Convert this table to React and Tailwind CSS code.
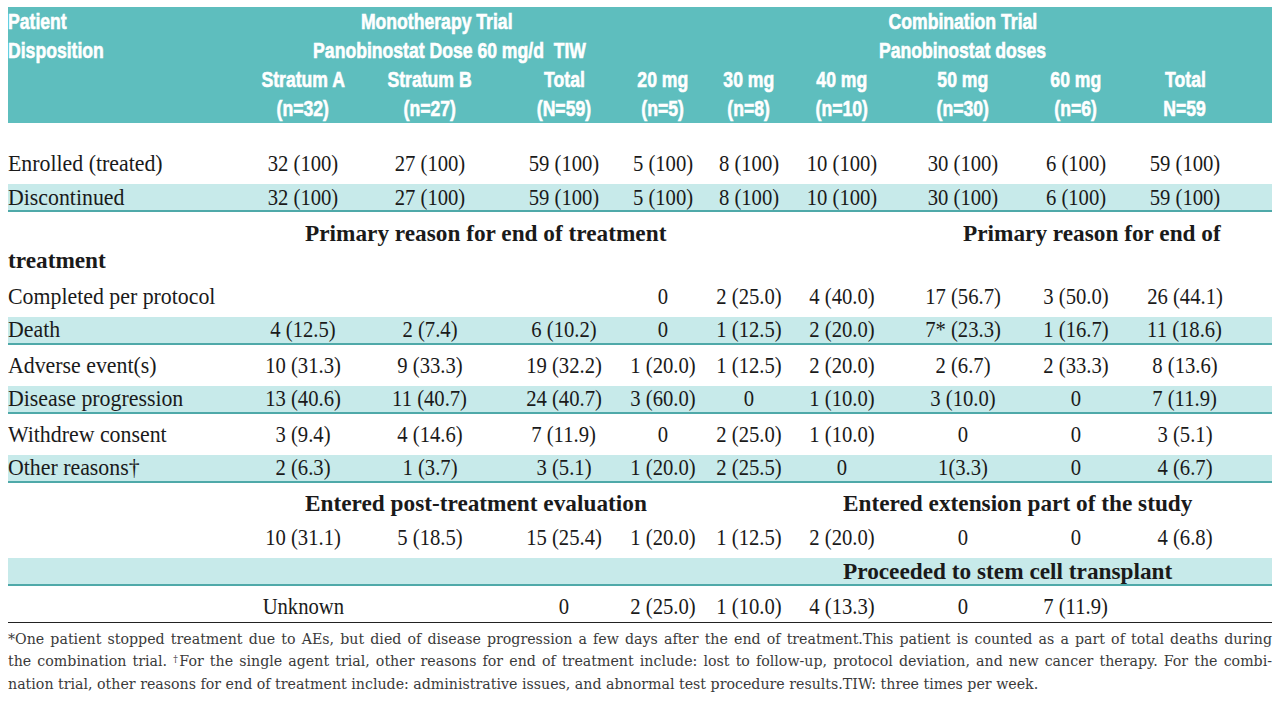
import React from 'react';

const cols = 'grid grid-cols-[232px_126px_128px_140px_58px_114px_72px_170px_56px_162px]';

const full = ['32 (100)', '27 (100)', '59 (100)', '5 (100)', '8 (100)', '10 (100)', '30 (100)', '6 (100)', '59 (100)'];

// header type is a heavy condensed sans; squeeze Liberation Sans Bold
const H = ({ children, left }) => (
  <span className={`inline-block whitespace-pre scale-x-[0.8] ${left ? 'origin-left' : 'origin-center'}`}>{children}</span>
);

const Num = ({ children }) => (
  <div className="flex justify-center whitespace-nowrap">
    <span className="inline-block scale-x-[0.86] origin-center">{children}</span>
  </div>
);

const Label = ({ children }) => (
  <div className="whitespace-nowrap">
    <span className="inline-block scale-x-[0.91] origin-left">{children}</span>
  </div>
);

const B = ({ children }) => (
  <span className="inline-block scale-x-[0.97] origin-left">{children}</span>
);

const Row = ({ label, cells, band }) => (
  <div className="h-[34.5px] flex flex-col justify-end">
    <div
      className={`${cols} h-[28px] pb-[1px] items-center ${
        band ? 'bg-[#c7eaea] border-b-2 border-[#4fa9a9]' : ''
      }`}
    >
      <Label>{label}</Label>
      {cells.map((c, i) => (
        <Num key={i}>{c}</Num>
      ))}
    </div>
  </div>
);

// bold section rows, placed by a left block of fixed width
const Section = ({ left, right, split, band }) => (
  <div className="h-[34.5px] flex flex-col justify-end">
    <div
      className={`h-[28px] pb-[1px] flex items-center font-bold whitespace-nowrap ${
        band ? 'bg-[#c7eaea] border-b-2 border-[#4fa9a9]' : ''
      }`}
    >
      <div className="pl-[297px] shrink-0" style={{ width: split }}>
        <B>{left}</B>
      </div>
      <div>
        <B>{right}</B>
      </div>
    </div>
  </div>
);

export default function App() {
  return (
    <div className="bg-white w-[1280px] h-[701px] overflow-hidden px-2 pt-[7px] text-[#1a1a1a]">
      {/* header */}
      <div className="bg-[#5ebebe] text-white font-bold text-[22px] leading-[29px] font-['Liberation_Sans',sans-serif] [-webkit-text-stroke:0.6px_white] h-[116px]">
        <div className={cols}>
          <div><H left>Patient</H></div>
          <div className="col-span-3 text-center"><H>Monotherapy Trial</H></div>
          <div className="col-span-6 text-center pl-[26px]"><H>Combination Trial</H></div>
        </div>
        <div className={cols}>
          <div><H left>Disposition</H></div>
          <div className="col-span-3 text-center pl-[26px]"><H>Panobinostat Dose 60 mg/d  TIW</H></div>
          <div className="col-span-6 text-center pl-[26px]"><H>Panobinostat doses</H></div>
        </div>
        <div className={cols}>
          <div />
          {['Stratum A', 'Stratum B', 'Total', '20 mg', '30 mg', '40 mg', '50 mg', '60 mg', 'Total'].map((t, i) => (
            <div key={i} className="flex justify-center"><H>{t}</H></div>
          ))}
        </div>
        <div className={cols}>
          <div />
          {['(n=32)', '(n=27)', '(N=59)', '(n=5)', '(n=8)', '(n=10)', '(n=30)', '(n=6)', 'N=59'].map((t, i) => (
            <div key={i} className="flex justify-center"><H>{t}</H></div>
          ))}
        </div>
      </div>

      {/* body */}
      <div className="mt-[20px] font-['Liberation_Serif',serif] text-[24px] leading-[24px]">
        <Row label="Enrolled (treated)" cells={full} />
        <Row label="Discontinued" cells={full} band />

        <div className="h-[63.5px] pt-[7.5px] font-bold leading-[27px] whitespace-nowrap">
          <div className="flex">
            <div className="w-[955px] pl-[297px] shrink-0"><B>Primary reason for end of treatment</B></div>
            <div><B>Primary reason for end of</B></div>
          </div>
          <div><B>treatment</B></div>
        </div>

        <Row label="Completed per protocol" cells={['', '', '', '0', '2 (25.0)', '4 (40.0)', '17 (56.7)', '3 (50.0)', '26 (44.1)']} />
        <Row label="Death" band cells={['4 (12.5)', '2 (7.4)', '6 (10.2)', '0', '1 (12.5)', '2 (20.0)', '7* (23.3)', '1 (16.7)', '11 (18.6)']} />
        <Row label="Adverse event(s)" cells={['10 (31.3)', '9 (33.3)', '19 (32.2)', '1 (20.0)', '1 (12.5)', '2 (20.0)', '2 (6.7)', '2 (33.3)', '8 (13.6)']} />
        <Row label="Disease progression" band cells={['13 (40.6)', '11 (40.7)', '24 (40.7)', '3 (60.0)', '0', '1 (10.0)', '3 (10.0)', '0', '7 (11.9)']} />
        <Row label="Withdrew consent" cells={['3 (9.4)', '4 (14.6)', '7 (11.9)', '0', '2 (25.0)', '1 (10.0)', '0', '0', '3 (5.1)']} />
        <Row label="Other reasons†" band cells={['2 (6.3)', '1 (3.7)', '3 (5.1)', '1 (20.0)', '2 (25.5)', '0', '1(3.3)', '0', '4 (6.7)']} />

        <Section left="Entered post-treatment evaluation" right="Entered extension part of the study" split={835} />
        <Row label="" cells={['10 (31.1)', '5 (18.5)', '15 (25.4)', '1 (20.0)', '1 (12.5)', '2 (20.0)', '0', '0', '4 (6.8)']} />
        <Section left="" right="Proceeded to stem cell transplant" split={835} band />
        <Row label="" cells={['Unknown', '', '0', '2 (25.0)', '1 (10.0)', '4 (13.3)', '0', '7 (11.9)', '']} />
      </div>

      {/* footnote */}
      <div className="border-t-[1.5px] border-[#222] mt-[1px] pt-[5px] font-['DejaVu_Serif',serif] text-[14.2px] leading-[22.5px] text-[#3a3a3a]">
        <div className="text-justify [text-align-last:justify] whitespace-nowrap">
          *One patient stopped treatment due to AEs, but died of disease progression a few days after the end of treatment.This patient is counted as a part of total deaths during
        </div>
        <div className="text-justify [text-align-last:justify] whitespace-nowrap">
          the combination trial. <sup className="text-[9px]">†</sup>For the single agent trial, other reasons for end of treatment include: lost to follow-up, protocol deviation, and new cancer therapy. For the combi-
        </div>
        <div className="whitespace-nowrap">
          nation trial, other reasons for end of treatment include: administrative issues, and abnormal test procedure results.TIW: three times per week.
        </div>
      </div>
    </div>
  );
}
